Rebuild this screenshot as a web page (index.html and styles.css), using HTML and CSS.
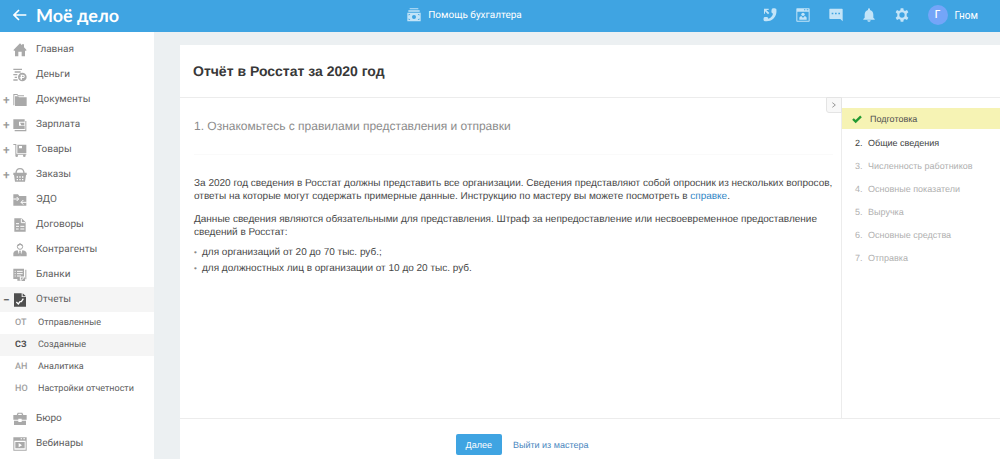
FILE: index.html
```html
<!DOCTYPE html>
<html lang="ru">
<head>
<meta charset="utf-8">
<meta name="viewport" content="width=device-width, initial-scale=1">
<title>Отчёт в Росстат за 2020 год — Моё дело</title>
<link rel="stylesheet" href="styles.css">
</head>
<body>
<header class="topbar">
  <a class="brand" href="#">
    <svg class="brand-arrow" viewBox="0 0 42 36" aria-hidden="true"><path d="M40 18H4M18 3L3 18l15 15" fill="none" stroke="currentColor" stroke-width="5"/></svg>
    <span class="brand-name">Моё дело</span>
  </a>
  <a class="help" href="#">
    <svg class="icon" viewBox="0 0 42 42" aria-hidden="true"><path d="M8 1h26v3H8zM4 7h34v4H4z"/><path fill-rule="evenodd" d="M1 14h40v26H1zM21 21a6 6 0 1 0 0 12a6 6 0 0 0 0-12zM5 18v5l5-5zM37 18v5l-5-5zM5 36v-5l5 5zM37 36v-5l-5 5z"/></svg>
    <span>Помощь бухгалтера</span>
  </a>
  <div class="tools">
    <button class="tool" aria-label="Звонок"><svg class="icon" viewBox="0 0 42 42" aria-hidden="true"><path d="M27 2c5-2 11-1 13 1c2 14-3 24-10 30c-7 6-16 8-27 6c-2-3-2-7 0-11c4-1 9-1 11 0l2 4c8-3 12-8 14-15l-4-3c-1-3-1-8 1-12z"/><path d="M3 2h14v4h-7l9 9-4 4-9-9v7H3z"/></svg></button>
    <button class="tool" aria-label="Вебинар"><svg class="icon" viewBox="0 0 42 42" aria-hidden="true"><path fill-rule="evenodd" d="M3 1h36a2 2 0 0 1 2 2v36a2 2 0 0 1-2 2H3a2 2 0 0 1-2-2V3a2 2 0 0 1 2-2zM4 11v27h34V11zM24 4v3h4V4zM32 4v3h5V4z"/><circle cx="21" cy="19" r="5"/><path d="M10 35v-5c0-3 3-5 7-5l4 5 4-5c4 0 7 2 7 5v5z"/></svg></button>
    <button class="tool" aria-label="Сообщения"><svg class="icon" viewBox="0 0 42 42" aria-hidden="true"><path fill-rule="evenodd" d="M3 2h36a2 2 0 0 1 2 2v36l-7-7H3a2 2 0 0 1-2-2V4a2 2 0 0 1 2-2zM8 14v5h5v-5zM18 14v5h5v-5zM28 14v5h5v-5z"/></svg></button>
    <button class="tool" aria-label="Уведомления"><svg class="icon" viewBox="0 0 42 42" aria-hidden="true"><path d="M18 4a3 3 0 0 1 6 0v2c7 2 10 8 10 14v9l4 4v2H4v-2l4-4v-9c0-6 3-12 10-14zM16 37h10c0 6-10 6-10 0z"/></svg></button>
    <button class="tool" aria-label="Настройки"><svg class="icon" viewBox="0 0 42 42" aria-hidden="true"><path fill-rule="evenodd" d="M17 1h8l1 6 4 2 6-3 4 7-5 4v8l5 4-4 7-6-3-4 2-1 6h-8l-1-6-4-2-6 3-4-7 5-4v-8l-5-4 4-7 6 3 4-2zM21 13a8 8 0 1 0 0 16a8 8 0 0 0 0-16z"/></svg></button>
    <button class="user"><span class="avatar">Г</span><span>Гном</span></button>
  </div>
</header>
<div class="layout">
  <nav class="sidebar">
    <a class="item" href="#"><span class="sign"></span><svg class="icon" viewBox="0 0 42 42" aria-hidden="true"><path d="M21 1l6 6V4h6v9l7 7v3h-4v17H26V26H16v14H6V23H2v-3z"/></svg>Главная</a>
    <a class="item" href="#"><span class="sign"></span><svg class="icon" viewBox="0 0 42 42" aria-hidden="true"><path d="M1 2h26v4H1zM5 10h18v4H5zM1 18h12v4H1zM5 26h7v4H5zM1 34h13v4H1z"/><path fill-rule="evenodd" d="M28 14a13 13 0 1 0 0 26a13 13 0 0 0 0-26zM23 20h7c7 0 7 10 0 10h-3v5h-4v-4h-3v-3h3zM27 23v4h3c3 0 3-4 0-4z"/></svg>Деньги</a>
    <a class="item" href="#"><span class="sign">+</span><svg class="icon" viewBox="0 0 42 42" aria-hidden="true"><path d="M1 37V3h12l3 4h17v3H15l-3-4H4v31z"/><path d="M6 10h9l3 3h23v26H6z"/></svg>Документы</a>
    <a class="item" href="#"><span class="sign">+</span><svg class="icon" viewBox="0 0 42 42" aria-hidden="true"><path fill-rule="evenodd" d="M1 4h34v29H1zM18 11v12h17V11z"/><path d="M21 14h13v8h-9zM5 36h32V9h3v31H5z"/></svg>Зарплата</a>
    <a class="item" href="#"><span class="sign">+</span><svg class="icon" viewBox="0 0 42 42" aria-hidden="true"><path d="M1 3h9v29h30v3H7V6H1z"/><path fill-rule="evenodd" d="M13 5h27v25H13zM18 9v7h9V9z"/><circle cx="11" cy="38" r="4"/><circle cx="34" cy="38" r="4"/></svg>Товары</a>
    <a class="item" href="#"><span class="sign">+</span><svg class="icon" viewBox="0 0 42 42" aria-hidden="true"><path d="M9 17C9-3 33-3 33 17" fill="none" stroke="currentColor" stroke-width="4"/><path fill-rule="evenodd" d="M1 14h40v7h-2l-3 20H6L3 21H1zM11 25v4h4v-4zM19 25v4h4v-4zM27 25v4h4v-4zM11 33v4h4v-4zM19 33v4h4v-4zM27 33v4h4v-4z"/></svg>Заказы</a>
    <a class="item" href="#"><span class="sign"></span><svg class="icon" viewBox="0 0 42 42" aria-hidden="true"><path d="M1 4h14l4 5h21v29H1z"/><path d="M1 18h15M11 12l6 6-6 6M41 28H24M31 21l-7 7 7 7" fill="none" stroke="#fff" stroke-width="3"/></svg>ЭДО</a>
    <a class="item" href="#"><span class="sign"></span><svg class="icon" viewBox="0 0 42 42" aria-hidden="true"><path d="M4 1h22l12 12v28H4z"/><path d="M9 17h9M9 25h9M22 25h12M9 33h8M22 33h12M25 2v12h12" fill="none" stroke="#fff" stroke-width="3"/></svg>Договоры</a>
    <a class="item" href="#"><span class="sign"></span><svg class="icon" viewBox="0 0 42 42" aria-hidden="true"><circle cx="21" cy="11" r="8" fill="none" stroke="currentColor" stroke-width="3"/><path d="M13 10c4-1 6-3 8-5l8 5V6L21 1l-8 5zM1 40v-9c1-6 7-8 13-9l5 17h4l5-17c6 1 12 3 13 9v9zM18 23h6l-1 4 2 9-4 4-4-4 2-9z"/></svg>Контрагенты</a>
    <a class="item" href="#"><span class="sign"></span><svg class="icon" viewBox="0 0 42 42" aria-hidden="true"><path d="M1 2h32v25L22 38h-9v-5H1zM37 5h3v29h-3zM24 39l12-12v12z"/><path d="M5 10h3M12 10h17M5 17h3M12 17h17M5 24h3M12 24h12M22 37V27h11" fill="none" stroke="#fff" stroke-width="3"/></svg>Бланки</a>
    <a class="item item-open" href="#"><span class="sign">−</span><svg class="icon" viewBox="0 0 42 42" aria-hidden="true"><path d="M3 1h23v11h13v29H3zM29 1l10 9H29z"/><path d="M10 27l6 6 5-7h4l6-9" fill="none" stroke="#fff" stroke-width="4"/></svg>Отчеты</a>
    <div class="submenu">
      <a class="subitem" href="#"><span class="code">ОТ</span>Отправленные</a>
      <a class="subitem subitem-active" href="#"><span class="code">СЗ</span>Созданные</a>
      <a class="subitem" href="#"><span class="code">АН</span>Аналитика</a>
      <a class="subitem" href="#"><span class="code">НО</span>Настройки отчетности</a>
    </div>
    <a class="item" href="#"><span class="sign"></span><svg class="icon" viewBox="0 0 42 42" aria-hidden="true"><path fill-rule="evenodd" d="M11 9l3-7h14l3 7h10v14H26v-3H16v3H1V9zM15 9h12l-2-4h-8zM3 26h13v4h10v-4h13v13H3z"/></svg>Бюро</a>
    <a class="item" href="#"><span class="sign"></span><svg class="icon" viewBox="0 0 42 42" aria-hidden="true"><path fill-rule="evenodd" d="M1 1h40v40H1zM4 11v27h34V11zM23 4v3h4V4zM31 4v3h5V4z"/><path fill-rule="evenodd" d="M7 15h28v19H7zM17 18v13l10-6z"/></svg>Вебинары</a>
  </nav>
  <main class="card">
    <h1 class="title">Отчёт в Росстат за 2020 год</h1>
    <div class="wizard">
      <section class="step">
        <h2 class="step-title">1. Ознакомьтесь с правилами представления и отправки</h2>
        <p class="text">За 2020 год сведения в Росстат должны представить все организации. Сведения представляют собой опросник из нескольких вопросов, ответы на которые могут содержать примерные данные. Инструкцию по мастеру вы можете посмотреть в <a class="link" href="#">справке</a>.</p>
        <p class="text">Данные сведения являются обязательными для представления. Штраф за непредоставление или несвоевременное предоставление сведений в Росстат:</p>
        <ul class="fines">
          <li>для организаций от 20 до 70 тыс. руб.;</li>
          <li>для должностных лиц в организации от 10 до 20 тыс. руб.</li>
        </ul>
      </section>
      <aside class="steps">
        <button class="collapse" aria-label="Свернуть"><svg class="chevron" viewBox="0 0 18 18" aria-hidden="true"><path d="M4 2l9 7-9 7" fill="none" stroke="currentColor" stroke-width="3"/></svg></button>
        <ol class="step-list">
          <li class="step-row step-current"><svg class="check" viewBox="0 0 30 30" aria-hidden="true"><path d="M3 15l8 8L27 7" fill="none" stroke="currentColor" stroke-width="7"/></svg>Подготовка</li>
          <li class="step-row step-next"><span class="num">2.</span>Общие сведения</li>
          <li class="step-row"><span class="num">3.</span>Численность работников</li>
          <li class="step-row"><span class="num">4.</span>Основные показатели</li>
          <li class="step-row"><span class="num">5.</span>Выручка</li>
          <li class="step-row"><span class="num">6.</span>Основные средства</li>
          <li class="step-row"><span class="num">7.</span>Отправка</li>
        </ol>
      </aside>
    </div>
    <footer class="actions">
      <button class="next">Далее</button>
      <a class="exit" href="#">Выйти из мастера</a>
    </footer>
  </main>
</div>
</body>
</html>
```

FILE: styles.css
```css
* { box-sizing: border-box; }

body {
  margin: 0;
  min-height: 100vh;
  display: flex;
  flex-direction: column;
  background: #ecf0f2;
  font-family: Roboto, "Liberation Sans", sans-serif;
  font-size: 10px;
  color: #484848;
  text-rendering: geometricPrecision;
}

a { color: inherit; text-decoration: none; }
button { margin: 0; padding: 0; border: 0; background: none; font: inherit; color: inherit; cursor: pointer; }
svg { display: block; flex: none; }
.icon { width: 14px; height: 14px; fill: currentColor; }

/* Top bar */
.topbar {
  display: grid;
  grid-template-columns: 1fr auto 1fr;
  align-items: center;
  height: 32px;
  padding: 0 22px 2px 13px;
  background: #3fa4e2;
  color: #fff;
}
.brand { display: flex; align-items: center; gap: 9px; }
.brand-arrow { width: 14px; height: 12px; }
.brand-name { font: 700 18px/28px Lato, "Open Sans", sans-serif; }
.help { display: flex; align-items: center; gap: 7px; padding-right: 62px; }
.help .icon, .tool { color: #c3e4f8; }
.tools { display: flex; align-items: center; justify-content: flex-end; gap: 19px; }
.user { display: flex; align-items: center; gap: 7px; }
.avatar {
  width: 20px;
  height: 20px;
  border-radius: 50%;
  background: #74a5f8;
  font-weight: 500;
  line-height: 20px;
}

/* Navigation */
.layout { display: flex; flex: 1; }
.sidebar {
  flex: none;
  width: 154px;
  padding-top: 5px;
  background: #fff;
  color: #606060;
}
.item {
  display: flex;
  align-items: center;
  height: 25px;
  padding-left: 3px;
}
.item .icon { margin-right: 9px; color: #a9a9a9; }
.sign { width: 10px; color: #999; font-size: 12px; font-weight: 500; line-height: 12px; }
.item-open { background: #f5f5f5; }
.item-open .icon, .item-open .sign { color: #505050; }
.submenu { padding-bottom: 6px; }
.subitem {
  display: flex;
  align-items: center;
  height: 22px;
  padding-left: 15px;
  font-size: 9px;
}
.code { width: 23px; color: #a0a0a0; font-weight: 500; }
.subitem-active { background: #f5f5f5; }
.subitem-active .code { color: #505050; font-weight: 700; }

/* Wizard card */
.card {
  flex: 1;
  display: flex;
  flex-direction: column;
  margin: 13px 0 0 26px;
  background: #fff;
  font-family: "Liberation Sans", Arial, sans-serif;
}
.title {
  margin: 0;
  padding: 16px 13px;
  color: #383838;
  font-size: 14px;
  line-height: 20px;
}
.wizard {
  flex: 1;
  display: flex;
  border-top: 1px solid #ececec;
  border-bottom: 1px solid #ececec;
}
.step { flex: 1; padding: 18px 8px 18px 14px; }
.step-title {
  margin: 0 0 22px;
  padding-bottom: 18px;
  border-bottom: 1px solid #fafafa;
  color: #8c8c8c;
  font-size: 12px;
  font-weight: 400;
  line-height: 20px;
}
.text { margin: 0 0 10px; line-height: 13px; }
.text:last-of-type { margin-bottom: 6px; }
.link { color: #2f86c6; }
.fines { margin: 0; padding: 0; list-style: none; }
.fines li { display: flex; line-height: 16px; }
.fines li::before { content: "•"; width: 8px; color: #888; font-size: 8px; }

.steps {
  position: relative;
  flex: none;
  width: 159px;
  padding-top: 10px;
  border-left: 1px solid #ececec;
  font-size: 9px;
}
.collapse {
  position: absolute;
  top: -1px;
  right: 100%;
  display: grid;
  place-items: center;
  width: 16px;
  height: 16px;
  border: 1px solid #e4e4e4;
  border-radius: 0 0 0 3px;
  background: #f8f8f8;
  color: #999;
}
.chevron { width: 6px; height: 6px; }
.step-list { margin: 0; padding: 0; list-style: none; color: #b0b0b0; }
.step-row { display: flex; align-items: center; height: 23px; padding-left: 13px; }
.step-current { height: 21px; margin-bottom: 2px; padding-left: 10px; background: #f6f3b4; color: #505050; }
.step-next { color: #404040; }
.num { width: 13px; }
.check { width: 10px; height: 10px; margin-right: 8px; color: #229a32; }

.actions {
  display: flex;
  align-items: center;
  justify-content: center;
  gap: 11px;
  padding: 15px 136px 4px 0;
  font-size: 9px;
}
.next {
  height: 21px;
  padding: 0 10px;
  border-radius: 2px;
  background: #3fa4e2;
  color: #fff;
}
.exit { color: #4886be; }
```
